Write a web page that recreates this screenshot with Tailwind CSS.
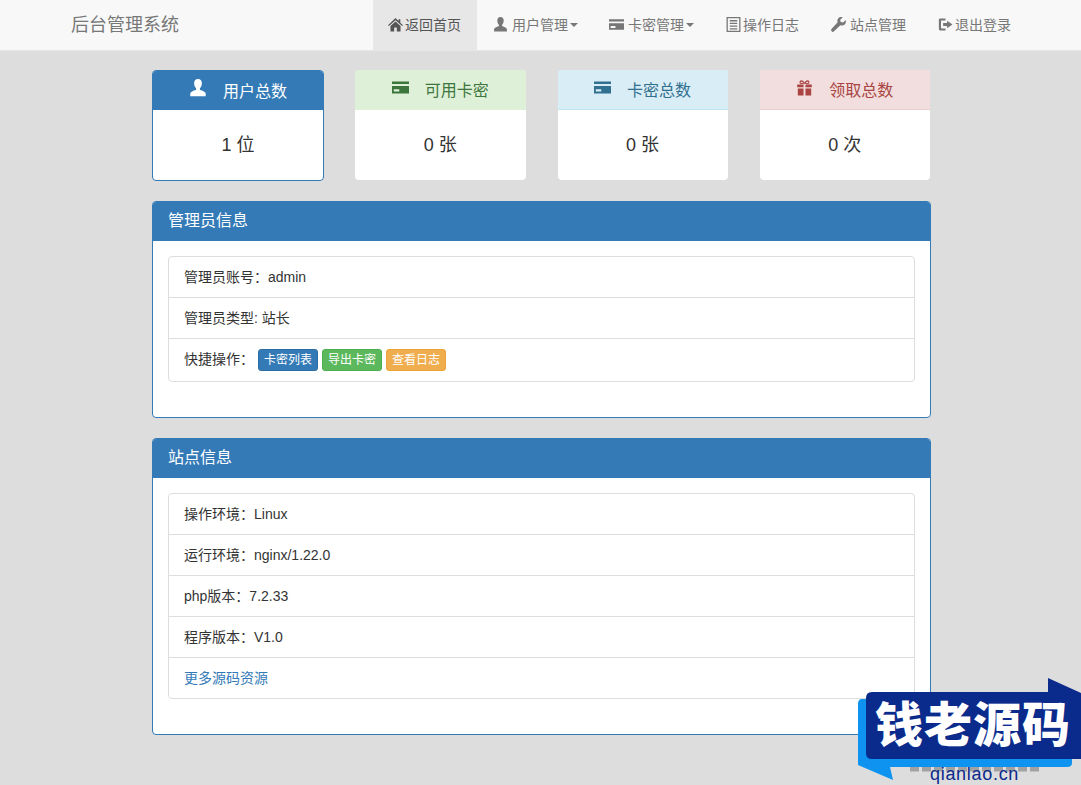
<!DOCTYPE html>
<html lang="zh-CN">
<head>
    <meta charset="UTF-8">
    <title>后台管理系统</title>
    <script src="https://cdn.jsdelivr.net/npm/@tailwindcss/browser@4"></script>
</head>
<body class="relative min-h-[785px] overflow-hidden bg-[#dddddd] text-sm text-[#333333] font-['Liberation_Sans','Noto_Sans_CJK_SC',sans-serif]">
    <!-- Navbar -->
    <nav class="h-[51px] bg-[#f8f8f8] border-b border-[#e7e7e7] flex">
        <a class="ml-[71px] w-[302px] text-[18px] leading-[50px] text-[#777777]">后台管理系统</a>
        <ul class="flex text-[#777777] leading-5">
            <li class="w-[104px] h-[50px] pl-[15px] bg-[#e7e7e7] text-[#555555] flex items-center">
                <svg class="w-[15px] h-[15px] mr-[2px] mb-[2px]" viewBox="0 0 14 14" fill="currentColor"><path d="M7 1 0 7.600l.8.9L7 3l6.200 5.500.8-.9L11.500 5.300V2H9.800v1.700zM2.300 8.500V13.500H5.800V9.800H8.200V13.500H11.700V8.500L7 4.300z"/></svg>
                返回首页
            </li>
            <li class="w-[117px] h-[50px] pl-[16px] flex items-center">
                <svg class="w-[15px] h-[15px] mr-1 mb-[2px]" viewBox="0 0 14 14" fill="currentColor"><path d="M7 0C4.900 0 4 1.500 4 3.300c0 1.600.6 3.100 1.500 3.900v1.200C3.300 9.300 1 10 1 11.500V13.500H13V11.500C13 10 10.700 9.300 8.500 8.400V7.200C9.400 6.400 10 4.900 10 3.300 10 1.500 9.100 0 7 0z"/></svg>
                用户管理<span class="ml-[2px] w-0 h-0 border-x-4 border-x-transparent border-t-4 border-t-[#777777]"></span>
            </li>
            <li class="w-[117px] h-[50px] pl-[15px] flex items-center">
                <svg class="w-[15px] h-[15px] mr-1 mb-[2px]" viewBox="0 0 14 14" fill="currentColor"><path fill-rule="evenodd" d="M0 2H14V12H0zM0 4.200V5.800H14V4.200zM1.500 8.500V10.300H6V8.500z"/></svg>
                卡密管理<span class="ml-[2px] w-0 h-0 border-x-4 border-x-transparent border-t-4 border-t-[#777777]"></span>
            </li>
            <li class="w-[105px] h-[50px] pl-[15px] flex items-center">
                <svg class="w-[15px] h-[15px] mr-[2px] mb-[2px]" viewBox="0 0 14 14" fill="none" stroke="currentColor"><path stroke-width="1.200" d="M1.100.6H12.900V13.400H1.100zM3.500 3.500H10.500M3.500 6H10.500M3.500 8.500H10.500M3.500 11H10.500"/></svg>
                操作日志
            </li>
            <li class="w-[107px] h-[50px] pl-[15px] flex items-center">
                <svg class="w-[15px] h-[15px] mr-1 mb-[2px]" viewBox="0 0 14 14" fill="currentColor"><path d="M13.700 2.800 11.300 5.200 9 4.700 8.600 2.500 11 .2C9.300-.3 7.700.2 6.800 1.200 5.900 2.200 5.700 3.700 6.200 5L.5 11.200C-.1 11.900 0 12.800.6 13.400 1.200 14 2.200 14.100 2.800 13.400L8.800 7.600C10.200 8.100 11.800 7.900 12.800 6.900 13.800 5.900 14.100 4.300 13.700 2.800z"/></svg>
                站点管理
            </li>
            <li class="h-[50px] pl-[15px] flex items-center">
                <svg class="w-[15px] h-[15px] mr-[2px] mb-[2px]" viewBox="0 0 14 14" fill="currentColor"><path d="M2 1.500H7V3.300H3.500C3 3.300 2.800 3.500 2.800 4V10C2.800 10.500 3 10.700 3.500 10.700H7V12.500H2C.9 12.500 .8 11.700 .8 11V3C.8 2.300 .9 1.500 2 1.500zM8.500 3.500 13.500 7 8.500 10.500V8.500H4.800V5.500H8.500z"/></svg>
                退出登录
            </li>
        </ul>
    </nav>

    <div class="w-[779px] ml-[152px] pt-[19px]">
        <!-- 统计卡片 -->
        <div class="grid grid-cols-4 gap-[30px] mb-5 items-start h-[111px]">
            <div class="h-[111px] bg-white border border-[#337ab7] rounded">
                <div class="h-[39px] bg-[#337ab7] text-white text-base flex items-center justify-center gap-4 rounded-t-[3px]">
                    <svg class="w-[18px] h-[18px] mb-[5px]" viewBox="0 0 14 14" fill="currentColor"><path d="M7 0C4.900 0 4 1.500 4 3.300c0 1.600.6 3.100 1.500 3.900v1.200C3.300 9.300 1 10 1 11.500V13.500H13V11.500C13 10 10.700 9.300 8.500 8.400V7.200C9.400 6.400 10 4.900 10 3.300 10 1.500 9.100 0 7 0z"/></svg>
                    <span class="mt-[2px]">用户总数</span>
                </div>
                <div class="h-[70px] pt-[2px] text-[18px] flex items-center justify-center">1 位</div>
            </div>
            <div class="h-[110px] mx-[1px] bg-white rounded">
                <div class="h-[40px] bg-[#dff0d8] text-[#3c763d] text-base flex items-center justify-center gap-4 rounded-t-[3px]">
                    <svg class="w-[17px] h-[17px] mb-[5px]" viewBox="0 0 14 14" fill="currentColor"><path fill-rule="evenodd" d="M0 2H14V12H0zM0 4.200V5.800H14V4.200zM1.500 8.500V10.300H6V8.500z"/></svg>
                    <span class="mt-[2px]">可用卡密</span>
                </div>
                <div class="h-[70px] pt-[2px] text-[18px] flex items-center justify-center">0 张</div>
            </div>
            <div class="h-[110px] mx-[1px] bg-white rounded">
                <div class="h-[40px] bg-[#d9edf7] text-[#31708f] text-base flex items-center justify-center gap-4 rounded-t-[3px] border-b border-[#bce8f1]">
                    <svg class="w-[17px] h-[17px] mb-[5px]" viewBox="0 0 14 14" fill="currentColor"><path fill-rule="evenodd" d="M0 2H14V12H0zM0 4.200V5.800H14V4.200zM1.500 8.500V10.300H6V8.500z"/></svg>
                    <span class="mt-[2px]">卡密总数</span>
                </div>
                <div class="h-[70px] pt-[2px] text-[18px] flex items-center justify-center">0 张</div>
            </div>
            <div class="h-[110px] mx-[1px] bg-white rounded">
                <div class="h-[40px] bg-[#f2dede] text-[#a94442] text-base flex items-center justify-center gap-4 rounded-t-[3px] border-b border-[#ebccd1]">
                    <svg class="w-[17px] h-[17px] mb-[5px]" viewBox="0 0 14 14" fill="currentColor"><path fill-rule="evenodd" d="M1 4.500H6.200V6.800H1zM7.800 4.500H13V6.800H7.800zM1.500 7.800H6.200V13.500H1.500zM7.800 7.800H12.500V13.500H7.800zM7 4 4 4.200C2.500 3.700 2.500 1.200 4.200 1 5.500.9 6.500 2 7 3 7.500 2 8.500.9 9.800 1 11.500 1.200 11.500 3.700 10 4.200zM4.300 2.200C3.500 2.300 3.700 3.300 4.500 3.300H6C5.600 2.700 5 2.100 4.300 2.200zM9.700 2.200C9 2.100 8.400 2.700 8 3.300H9.500C10.300 3.300 10.500 2.300 9.700 2.200z"/></svg>
                    <span class="mt-[2px]">领取总数</span>
                </div>
                <div class="h-[70px] pt-[2px] text-[18px] flex items-center justify-center">0 次</div>
            </div>
        </div>

        <!-- 管理员信息 -->
        <div class="bg-white border border-[#337ab7] rounded mb-5">
            <div class="h-[39px] bg-[#337ab7] text-white text-base leading-[37px] px-[15px] rounded-t-[3px]">管理员信息</div>
            <div class="p-[15px]">
                <ul class="mb-5 border border-[#dddddd] rounded leading-5 divide-y divide-[#dddddd]">
                    <li class="h-[41px] px-[15px] pt-[10px]">管理员账号：admin</li>
                    <li class="h-[41px] px-[15px] pt-[10px]">管理员类型: 站长</li>
                    <li class="h-[42px] px-[15px] pb-[2px] flex items-center">
                        <span class="mr-1">快捷操作：</span>
                        <div class="flex gap-1 mt-[2px] text-xs text-white">
                            <a class="w-[60px] h-[22px] leading-5 text-center rounded-[3px] bg-[#337ab7] border border-[#2e6da4]">卡密列表</a>
                            <a class="w-[60px] h-[22px] leading-5 text-center rounded-[3px] bg-[#5cb85c] border border-[#4cae4c]">导出卡密</a>
                            <a class="w-[60px] h-[22px] leading-5 text-center rounded-[3px] bg-[#f0ad4e] border border-[#eea236]">查看日志</a>
                        </div>
                    </li>
                </ul>
            </div>
        </div>

        <!-- 站点信息 -->
        <div class="bg-white border border-[#337ab7] rounded">
            <div class="h-[39px] bg-[#337ab7] text-white text-base leading-[37px] px-[15px] rounded-t-[3px]">站点信息</div>
            <div class="p-[15px]">
                <ul class="mb-5 border border-[#dddddd] rounded leading-5 divide-y divide-[#dddddd]">
                    <li class="h-[41px] px-[15px] pt-[10px]">操作环境：Linux</li>
                    <li class="h-[41px] px-[15px] pt-[10px]">运行环境：nginx/1.22.0</li>
                    <li class="h-[41px] px-[15px] pt-[10px]">php版本：7.2.33</li>
                    <li class="h-[41px] px-[15px] pt-[10px]">程序版本：V1.0</li>
                    <li class="h-[40px] px-[15px] pt-[10px] text-[#337ab7]">更多源码资源</li>
                </ul>
            </div>
        </div>
    </div>

    <!-- 水印 -->
    <div class="absolute left-[858px] top-[678px] w-[223px] h-[107px]">
        <svg class="absolute inset-0" width="223" height="107" viewBox="0 0 223 107">
            <path d="M52 91H182" stroke="#8a8a8a" stroke-width="5" stroke-dasharray="9 3" opacity=".7"/>
            <path d="M0 26Q0 21 4 21H214V85Q214 89 209 89H32L35 102 0 87z" fill="#0e94f0"/>
            <path d="M190 14V0L223 15V81H14Q8 81 8 75V20Q8 14 14 14z" fill="#0a2a8c"/>
        </svg>
        <span class="absolute left-[16px] top-[21px] w-[198px] text-center text-[48px] leading-[54px] font-black tracking-[1px] text-white whitespace-nowrap">钱老源码</span>
        <span class="absolute left-[72px] top-[85px] text-[18px] leading-[22px] text-[#0a2a8c] tracking-[0.7px] whitespace-nowrap">qianlao.cn</span>
    </div>
</body>
</html>
